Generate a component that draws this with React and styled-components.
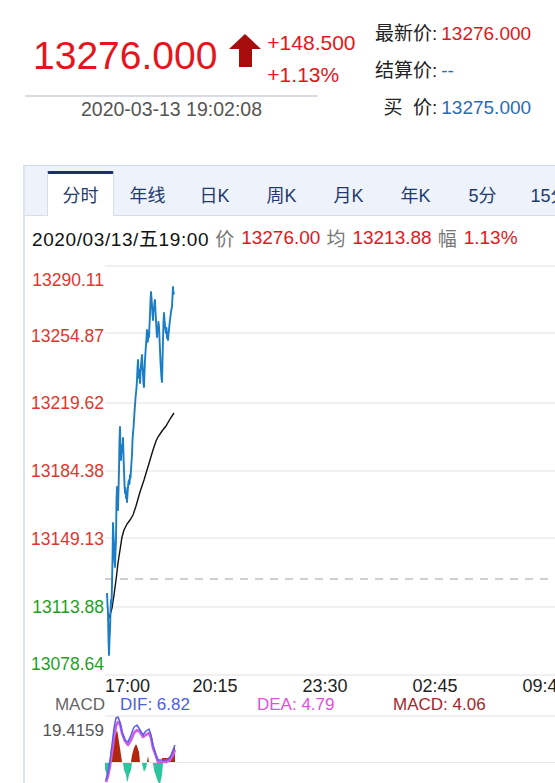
import styled, { createGlobalStyle } from "styled-components";

const GlobalStyle = createGlobalStyle`
  html, body {
    margin: 0;
    padding: 0;
    background: #fff;
  }
  body {
    font-family: "Liberation Sans", "Noto Sans CJK SC", sans-serif;
    overflow: hidden;
  }
`;

const RED = "#e4161c";
const AXIS_RED = "#e0372d";
const AXIS_GREEN = "#1f9f1f";

const Page = styled.div`
  width: 555px;
  height: 783px;
  overflow: hidden;
`;

const Header = styled.div`
  display: flex;
  height: 165px;
  box-sizing: border-box;
  padding: 15px 0 0 25px;
`;

const LeftBlock = styled.div`
  width: 293px;
  margin-top: 12px;
`;

const PriceRow = styled.div`
  display: flex;
  align-items: flex-start;
  padding-left: 8px;
  height: 64px;
`;

const BigPrice = styled.div`
  font-size: 39px;
  line-height: 39px;
  margin-top: 9px;
  color: ${RED};
`;

const ArrowIcon = styled.svg`
  margin: 7px 0 0 12px;
  flex-shrink: 0;
`;

const ChangeCol = styled.div`
  margin-left: 6px;
  font-size: 21px;
  line-height: 32px;
  color: ${RED};
`;

const Divider = styled.div`
  margin-top: 4px;
  height: 2px;
  background: #d9dde3;
`;

const DateText = styled.div`
  text-align: center;
  font-size: 19.5px;
  line-height: 24px;
  color: #555;
`;

const RightBlock = styled.div`
  margin-left: 57px;
  display: grid;
  grid-template-columns: auto auto;
  align-content: start;
  font-size: 19px;
  line-height: 37px;
`;

const InfoLabel = styled.span`
  justify-self: end;
  color: #222;
  white-space: pre;
`;

const InfoValue = styled.span`
  margin-left: 4px;
  color: ${(p) => p.$color};
`;

const Panel = styled.div`
  margin-left: 23px;
  width: 620px;
  border-top: 1px solid #cfdaea;
  border-left: 2px solid #dbe4f0;
`;

const TabBar = styled.div`
  display: flex;
  align-items: flex-end;
  height: 49px;
  padding-left: 22px;
  background: #edf2fb;
  border-bottom: 1px solid #d3ddeb;
`;

const Tab = styled.div`
  width: 67px;
  height: 45px;
  box-sizing: border-box;
  margin-bottom: -1px;
  padding-bottom: 3px;
  display: flex;
  align-items: center;
  justify-content: center;
  font-size: 18px;
  color: #1f3a6e;
  border-top: 3px solid ${(p) => (p.$active ? "#1a2f6b" : "transparent")};
  border-left: 1px solid ${(p) => (p.$active ? "#d3ddeb" : "transparent")};
  border-right: 1px solid ${(p) => (p.$active ? "#d3ddeb" : "transparent")};
  background: ${(p) => (p.$active ? "#fff" : "transparent")};
  border-radius: 2px 2px 0 0;
`;

const QuoteRow = styled.div`
  display: flex;
  align-items: center;
  height: 43px;
  padding-left: 7px;
  font-size: 19px;
  white-space: nowrap;
`;

const QuoteDate = styled.span`
  color: #111;
  letter-spacing: 0.6px;
`;

const QuoteLabel = styled.span`
  margin-left: 6px;
  color: #777;
`;

const QuoteValue = styled.span`
  margin-left: 7px;
  color: ${RED};
`;

const ChartSvg = styled.svg`
  display: block;
`;

const TimeAxis = styled.div`
  display: flex;
  height: 20px;
  padding-left: 80px;
  font-size: 18px;
  line-height: 20px;
  color: #222;
  white-space: nowrap;
`;

const TimeTick = styled.span`
  flex-shrink: 0;
  width: ${(p) => (p.$first ? "55px" : "110px")};
  text-align: ${(p) => (p.$first ? "left" : "center")};
`;

const Legend = styled.div`
  display: flex;
  height: 18px;
  font-size: 17px;
  line-height: 18px;
  white-space: nowrap;
`;

const LegendName = styled.span`
  width: 80px;
  text-align: right;
  color: #666;
  margin-right: 15px;
`;

const LegendItem = styled.span`
  width: ${(p) => p.$width}px;
  flex-shrink: 0;
  color: ${(p) => p.$color};
`;

const priceLine = [
  [107, 593], [107.5, 605], [108, 612], [108.5, 640], [109, 655], [109.5, 640], [110, 630],
  [110.5, 612], [111, 600], [111.5, 604], [112, 585], [112.5, 560], [113, 523], [113.5, 535],
  [114, 545], [114.5, 560], [115, 567], [115.5, 552], [116, 540], [116.5, 500], [117, 487],
  [117.5, 498], [118, 510], [118.5, 490], [119, 470], [119.5, 440], [120, 427], [120.5, 450],
  [121, 460], [121.5, 450], [122, 445], [122.5, 452], [123, 438], [123.5, 456], [124, 470],
  [124.5, 485], [125, 493], [125.5, 488], [126, 498], [126.5, 492], [127, 502], [127.5, 494],
  [128, 487], [128.5, 482], [129, 480], [129.5, 484], [130, 475], [130.5, 478], [131, 470],
  [131.5, 462], [132, 455], [132.5, 440], [133, 433], [133.5, 428], [134, 420], [134.5, 412],
  [135, 405], [135.5, 398], [136, 393], [136.5, 388], [137, 380], [137.5, 368], [138, 360],
  [138.5, 372], [139, 378], [139.5, 370], [140, 383], [140.5, 372], [141, 365], [141.5, 360],
  [142, 355], [142.5, 366], [143, 375], [143.5, 384], [144, 387], [144.5, 372], [145, 360],
  [145.5, 352], [146, 345], [146.5, 338], [147, 330], [147.5, 342], [148, 340], [148.5, 332],
  [149, 337], [149.5, 325], [150, 315], [150.5, 300], [151, 292], [151.5, 298], [152, 305],
  [152.5, 314], [153, 320], [153.5, 308], [154, 310], [154.5, 302], [155, 300], [155.5, 312],
  [156, 320], [156.5, 330], [157, 337], [157.5, 328], [158, 330], [158.5, 322], [159, 327],
  [159.5, 338], [160, 350], [160.5, 362], [161, 370], [161.5, 378], [162, 382], [162.5, 360],
  [163, 340], [163.5, 322], [164, 313], [164.5, 320], [165, 325], [165.5, 330], [166, 333],
  [166.5, 328], [167, 338], [167.5, 332], [168, 340], [168.5, 334], [169, 330], [169.5, 324],
  [170, 320], [170.5, 316], [171, 312], [171.5, 309], [172, 307], [172.5, 296], [173, 287],
  [173.5, 294], [174, 292],
];

const avgLine = [
  [108, 620], [110, 615], [112, 608], [114, 595], [116, 580], [118, 563], [120, 550],
  [122, 537], [124, 530], [127, 524], [130, 520], [133, 515], [136, 506], [140, 492],
  [144, 480], [147, 470], [150, 460], [153, 450], [156, 441], [158, 437], [162, 431],
  [166, 426], [170, 419], [174, 413],
];

const gridY = [266, 333, 403, 471, 538, 607, 675];

const yLabels = [
  ["13290.11", 280, AXIS_RED],
  ["13254.87", 336, AXIS_RED],
  ["13219.62", 403, AXIS_RED],
  ["13184.38", 471, AXIS_RED],
  ["13149.13", 539, AXIS_RED],
  ["13113.88", 607, AXIS_GREEN],
  ["13078.64", 664, AXIS_GREEN],
];

const redBars = [
  "110,762 111,748 113,745 114,738 116,733 117,730 118,735 119,742 120,748 121,755 122,762",
  "131,762 132,755 134,748 136,744 137,746 139,752 140,762",
  "147,762 148,756 149,762",
  "162,762 162,758 168,758 170,756 172,752 174,748 175,745 175,762",
];

const tealBars = [
  "105,763 105,770 106,772 107,778 108,776 109,770 110,765 111,763",
  "123,763 124,770 126,775 127,782 128,780 129,775 131,770 132,763",
  "142,763 143,768 144,772 146,768 147,763",
  "153,763 154,770 156,776 158,782 160,784 162,775 163,763",
];

const difLine = [
  [106, 780], [108, 772], [110, 760], [112, 745], [114, 728], [116, 718], [118, 717],
  [120, 722], [122, 732], [125, 740], [128, 742], [131, 735], [134, 727], [137, 725],
  [140, 730], [143, 735], [146, 731], [149, 729], [151, 735], [153, 745], [156, 755],
  [158, 760], [162, 760], [166, 760], [170, 758], [173, 750], [175, 745],
];

const deaLine = [
  [106, 782], [108, 776], [110, 766], [112, 752], [114, 737], [116, 726], [118, 722],
  [120, 724], [122, 733], [125, 741], [128, 745], [131, 740], [134, 733], [137, 730],
  [140, 732], [143, 737], [146, 735], [149, 733], [151, 738], [153, 748], [156, 756],
  [158, 762], [162, 762], [166, 762], [170, 760], [173, 755], [175, 750],
];

const pts = (arr) => arr.map(([x, y]) => `${x},${y}`).join(" ");

const tabs = ["分时", "年线", "日K", "周K", "月K", "年K", "5分", "15分"];
const times = ["17:00", "20:15", "23:30", "02:45", "09:45"];

const PriceChart = () => (
  <ChartSvg width="530" height="417" viewBox="25 259 530 417">
    {gridY.map((y) => (
      <line key={y} x1="105" x2="555" y1={y} y2={y} stroke="#ebebeb" strokeWidth="1.5" />
    ))}
    <line x1="105" x2="555" y1="579" y2="579" stroke="#a0a0a0" strokeWidth="1.2" strokeDasharray="8 7" />
    {yLabels.map(([text, y, color]) => (
      <text
        key={text}
        x="104"
        y={y}
        textAnchor="end"
        dominantBaseline="central"
        fontSize="17.5"
        fontFamily="Liberation Sans, sans-serif"
        fill={color}
      >
        {text}
      </text>
    ))}
    <polyline points={pts(avgLine)} fill="none" stroke="#111" strokeWidth="1.4" />
    <polyline points={pts(priceLine)} fill="none" stroke="#1b7dc6" strokeWidth="1.9" strokeLinejoin="round" />
  </ChartSvg>
);

const MacdChart = () => (
  <ChartSvg width="530" height="69" viewBox="25 714 530 69">
    <line x1="105" x2="555" y1="716" y2="716" stroke="#ebebeb" strokeWidth="1.5" />
    <line x1="105" x2="555" y1="762.5" y2="762.5" stroke="#e6e6e6" strokeWidth="1" />
    <text
      x="104"
      y="730"
      textAnchor="end"
      dominantBaseline="central"
      fontSize="17"
      fontFamily="Liberation Sans, sans-serif"
      fill="#555"
    >
      19.4159
    </text>
    {redBars.map((p) => (
      <polygon key={p} points={p} fill="#b3260e" />
    ))}
    {tealBars.map((p) => (
      <polygon key={p} points={p} fill="#2ec49f" />
    ))}
    <polyline points={pts(deaLine)} fill="none" stroke="#d35ce0" strokeWidth="2.6" strokeLinejoin="round" />
    <polyline points={pts(difLine)} fill="none" stroke="#5a5cf0" strokeWidth="1.5" strokeLinejoin="round" />
  </ChartSvg>
);

export default function App() {
  return (
    <Page>
      <GlobalStyle />
      <Header>
        <LeftBlock>
          <PriceRow>
            <BigPrice>13276.000</BigPrice>
            <ArrowIcon width="32" height="33" viewBox="0 0 32 33">
              <path d="M16 0 L32 15 L23 15 L23 33 L10 33 L10 15 L0 15 Z" fill="#a70d0d" />
            </ArrowIcon>
            <ChangeCol>
              <div>+148.500</div>
              <div>+1.13%</div>
            </ChangeCol>
          </PriceRow>
          <Divider />
          <DateText>2020-03-13 19:02:08</DateText>
        </LeftBlock>
        <RightBlock>
          <InfoLabel>最新价:</InfoLabel>
          <InfoValue $color={RED}>13276.000</InfoValue>
          <InfoLabel>结算价:</InfoLabel>
          <InfoValue $color="#2b6cb8">--</InfoValue>
          <InfoLabel>{"买  价:"}</InfoLabel>
          <InfoValue $color="#2b6cb8">13275.000</InfoValue>
        </RightBlock>
      </Header>
      <Panel>
        <TabBar>
          {tabs.map((t, i) => (
            <Tab key={t} $active={i === 0}>
              {t}
            </Tab>
          ))}
        </TabBar>
        <QuoteRow>
          <QuoteDate>2020/03/13/五19:00</QuoteDate>
          <QuoteLabel>价</QuoteLabel>
          <QuoteValue>13276.00</QuoteValue>
          <QuoteLabel>均</QuoteLabel>
          <QuoteValue>13213.88</QuoteValue>
          <QuoteLabel>幅</QuoteLabel>
          <QuoteValue>1.13%</QuoteValue>
        </QuoteRow>
        <PriceChart />
        <TimeAxis>
          {times.map((t, i) => (
            <TimeTick key={t} $first={i === 0}>
              {t}
            </TimeTick>
          ))}
        </TimeAxis>
        <Legend>
          <LegendName>MACD</LegendName>
          <LegendItem $width={137} $color="#4b5ee8">DIF: 6.82</LegendItem>
          <LegendItem $width={136} $color="#e050e0">DEA: 4.79</LegendItem>
          <LegendItem $width={120} $color="#a4262c">MACD: 4.06</LegendItem>
        </Legend>
        <MacdChart />
      </Panel>
    </Page>
  );
}
